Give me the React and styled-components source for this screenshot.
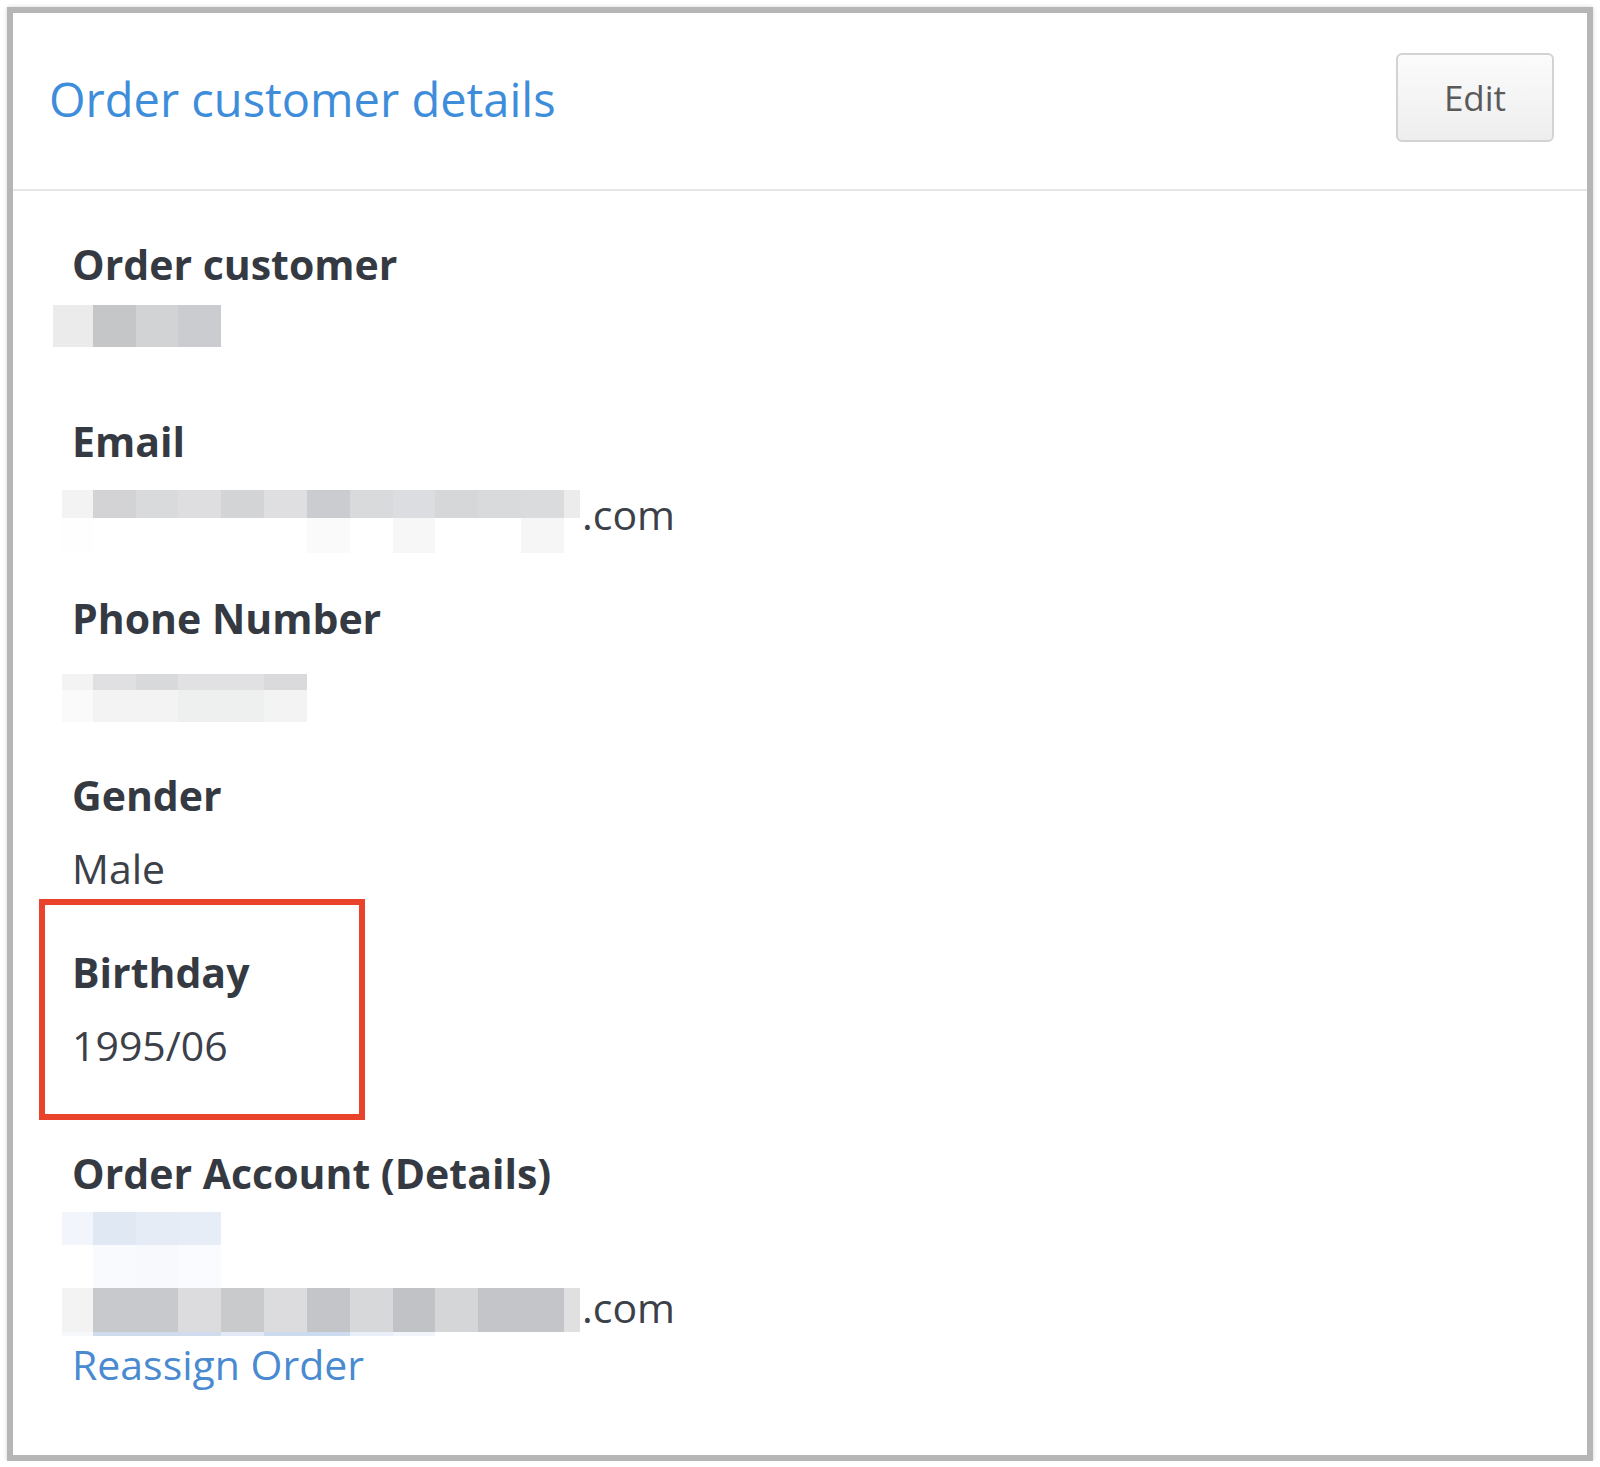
import styled, { createGlobalStyle } from 'styled-components'

const GlobalStyle = createGlobalStyle`
  html, body {
    margin: 0;
    padding: 0;
    background: #fff;
  }

  body {
    font-family: 'Open Sans', 'Liberation Sans', sans-serif;
  }
`

const Card = styled.section`
  box-sizing: border-box;
  width: 1586px;
  height: 1454px;
  margin: 7px 0 0 7px;
  border: 6px solid #b6b6b6;
  box-shadow: 0 0 4px rgba(0, 0, 0, 0.18);
  background: #fff;
  display: flex;
  flex-direction: column;
`

const Header = styled.header`
  height: 176px;
  flex-shrink: 0;
  display: flex;
  align-items: center;
  justify-content: space-between;
  padding: 0 33px 0 36px;
  border-bottom: 2px solid #e6e6e6;
`

const Title = styled.h2`
  margin: 0 0 4px;
  font-size: 47px;
  font-weight: 400;
  line-height: 56px;
  color: #3d8ddb;
`

const EditButton = styled.button`
  box-sizing: border-box;
  width: 158px;
  height: 89px;
  margin-bottom: 7px;
  border: 2px solid #d3d3d3;
  border-radius: 6px;
  background: linear-gradient(#fbfbfb, #eeeeee);
  font-family: inherit;
  font-size: 35px;
  color: #5a5a5a;
  cursor: pointer;
`

const Body = styled.div`
  padding: 45px 0 0 59px;
`

const Field = styled.div`
  position: relative;
  margin-bottom: ${(p) => (p.$spaced ? 72 : 48)}px;

  ${(p) =>
    p.$marked &&
    `
    &::before {
      content: '';
      position: absolute;
      top: -45px;
      left: -33px;
      width: 326px;
      height: 221px;
      box-sizing: border-box;
      border: 6px solid #e9442b;
      pointer-events: none;
    }
  `}
`

const Label = styled.div`
  font-size: 41px;
  font-weight: 700;
  line-height: 56px;
  color: #353a42;
  margin-bottom: 17px;
`

const Value = styled.div`
  display: flex;
  align-items: flex-start;
  min-height: 56px;
  font-size: 41px;
  line-height: 56px;
  color: #3b4049;
`

const Suffix = styled.span`
  margin-top: ${(p) => p.$top || 0}px;
  margin-left: 2px;
`

const Mosaic = styled.div`
  display: flex;
  flex-direction: column;
  margin-top: ${(p) => p.$top || 0}px;
  margin-bottom: ${(p) => p.$bottom || 0}px;
  margin-left: ${(p) => p.$left || 0}px;
`

const MosaicRow = styled.div`
  display: flex;
  height: ${(p) => p.$h}px;
`

const Cell = styled.div`
  width: ${(p) => p.$w}px;
  background: ${(p) => p.$c};
`

const ReassignLink = styled.a`
  display: inline-block;
  font-size: 41px;
  line-height: 56px;
  color: #4a8ad0;
  text-decoration: none;
  cursor: pointer;
`

// blurred-out personal data, drawn as blocks
const customerBlocks = [
  {
    h: 42,
    cells: [
      [40, '#ebebeb'],
      [43, '#c5c6c8'],
      [42, '#d2d3d5'],
      [43, '#cbcccf'],
    ],
  },
]

const emailBlocks = [
  {
    h: 28,
    cells: [
      [31, '#f3f3f3'],
      [43, '#d3d3d5'],
      [42, '#d9dadc'],
      [43, '#dedee0'],
      [43, '#d3d4d6'],
      [43, '#dfdfe1'],
      [43, '#cbccd0'],
      [43, '#d9dadc'],
      [42, '#dcdde0'],
      [43, '#d6d7d9'],
      [43, '#d9dadc'],
      [43, '#dadbdd'],
      [16, '#ececec'],
    ],
  },
  {
    h: 35,
    cells: [
      [31, '#fefefe'],
      [43, '#fff'],
      [42, '#fff'],
      [43, '#fff'],
      [43, '#fff'],
      [43, '#fff'],
      [43, '#fafafa'],
      [43, '#fff'],
      [42, '#f7f7f7'],
      [43, '#fff'],
      [43, '#fff'],
      [43, '#f6f6f6'],
      [16, '#fff'],
    ],
  },
]

const phoneBlocks = [
  {
    h: 16,
    cells: [
      [31, '#f3f3f3'],
      [43, '#e0e0e2'],
      [42, '#d8d9db'],
      [86, '#e1e1e3'],
      [43, '#dadadc'],
    ],
  },
  {
    h: 32,
    cells: [
      [31, '#fafafa'],
      [85, '#f3f3f3'],
      [86, '#eeefef'],
      [43, '#f3f3f3'],
    ],
  },
]

const accountBlocks = [
  {
    h: 33,
    cells: [
      [31, '#f2f5fb'],
      [43, '#dfe8f3'],
      [42, '#e5ecf6'],
      [43, '#e6edf7'],
    ],
  },
  {
    h: 43,
    cells: [
      [31, '#fff'],
      [43, '#f9fafd'],
      [42, '#f8f9fd'],
      [43, '#fafbfe'],
    ],
  },
  {
    h: 44,
    cells: [
      [31, '#f3f3f3'],
      [85, '#c8c9cc'],
      [43, '#dcdcde'],
      [43, '#c9cacc'],
      [43, '#dcdcde'],
      [43, '#c4c5c8'],
      [43, '#d7d8da'],
      [42, '#c1c2c5'],
      [43, '#d5d6d8'],
      [86, '#c4c5c8'],
      [16, '#e0e0e0'],
    ],
  },
  {
    h: 4,
    cells: [
      [31, '#f6f8fc'],
      [128, '#d0dcee'],
      [43, '#e3eaf5'],
      [86, '#cddbef'],
      [43, '#e9eff8'],
      [42, '#f1f5fb'],
    ],
  },
]

function Blocks({ rows, top, bottom, left }) {
  return (
    <Mosaic $top={top} $bottom={bottom} $left={left}>
      {rows.map((row, i) => (
        <MosaicRow key={i} $h={row.h}>
          {row.cells.map(([w, c], j) => (
            <Cell key={j} $w={w} $c={c} />
          ))}
        </MosaicRow>
      ))}
    </Mosaic>
  )
}

export default function App() {
  return (
    <>
      <GlobalStyle />
      <Card>
        <Header>
          <Title>Order customer details</Title>
          <EditButton type="button">Edit</EditButton>
        </Header>
        <Body>
          <Field>
            <Label>Order customer</Label>
            <Value>
              <Blocks rows={customerBlocks} top={-4} left={-19} />
            </Value>
          </Field>
          <Field>
            <Label>Email</Label>
            <Value>
              <Blocks rows={emailBlocks} top={4} bottom={-11} left={-10} />
              <Suffix>.com</Suffix>
            </Value>
          </Field>
          <Field>
            <Label>Phone Number</Label>
            <Value>
              <Blocks rows={phoneBlocks} top={11} bottom={-3} left={-10} />
            </Value>
          </Field>
          <Field>
            <Label>Gender</Label>
            <Value>Male</Value>
          </Field>
          <Field $marked $spaced>
            <Label>Birthday</Label>
            <Value>1995/06</Value>
          </Field>
          <Field>
            <Label>Order Account (Details)</Label>
            <Value>
              <Blocks rows={accountBlocks} top={-6} left={-10} />
              <Suffix $top={61}>.com</Suffix>
            </Value>
            <ReassignLink>Reassign Order</ReassignLink>
          </Field>
        </Body>
      </Card>
    </>
  )
}
